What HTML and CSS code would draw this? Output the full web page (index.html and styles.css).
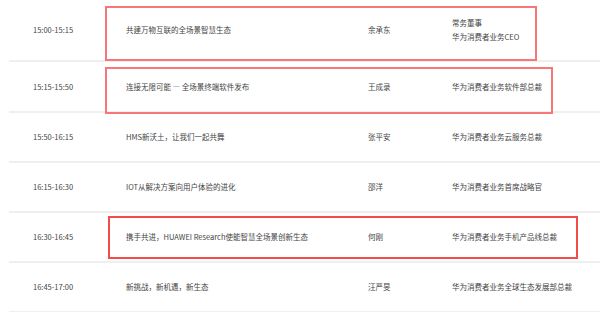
FILE: index.html
```html
<!DOCTYPE html>
<html lang="zh">
<head>
<meta charset="utf-8">
<link rel="stylesheet" href="styles.css">
</head>
<body>
<div class="agenda">
  <div class="row tall">
    <div class="time">15:00-15:15</div>
    <div class="topic">共建万物互联的全场景智慧生态</div>
    <div class="speaker">余承东</div>
    <div class="role"><span>常务董事</span><span>华为消费者业务CEO</span></div>
  </div>
  <div class="row r2">
    <div class="time">15:15-15:50</div>
    <div class="topic">连接无限可能 — 全场景终端软件发布</div>
    <div class="speaker">王成录</div>
    <div class="role">华为消费者业务软件部总裁</div>
  </div>
  <div class="row">
    <div class="time">15:50-16:15</div>
    <div class="topic">HMS新沃土，让我们一起共舞</div>
    <div class="speaker">张平安</div>
    <div class="role">华为消费者业务云服务总裁</div>
  </div>
  <div class="row">
    <div class="time">16:15-16:30</div>
    <div class="topic">IOT从解决方案向用户体验的进化</div>
    <div class="speaker">邵洋</div>
    <div class="role">华为消费者业务首席战略官</div>
  </div>
  <div class="row">
    <div class="time">16:30-16:45</div>
    <div class="topic">携手共进，HUAWEI Research使能智慧全场景创新生态</div>
    <div class="speaker">何刚</div>
    <div class="role">华为消费者业务手机产品线总裁</div>
  </div>
  <div class="row">
    <div class="time">16:45-17:00</div>
    <div class="topic">新挑战，新机遇，新生态</div>
    <div class="speaker">汪严旻</div>
    <div class="role">华为消费者业务全球生态发展部总裁</div>
  </div>
  <div class="mark mark1"></div>
  <div class="mark mark2"></div>
  <div class="mark mark3"></div>
</div>
</body>
</html>
```

FILE: styles.css
```css
html, body {
  margin: 0;
  padding: 0;
  background: #ffffff;
  overflow: hidden;
}
body {
  font-family: "Noto Sans CJK SC", "Noto Sans", sans-serif;
  font-size: 7.5px;
  color: #444444;
}
.agenda {
  position: relative;
  margin-left: 9px;
  width: 591px;
}
.row {
  display: grid;
  grid-template-columns: 117px 242px 84px 1fr;
  align-items: center;
  height: 48px;
  border-bottom: 2px solid #efefef;
  line-height: 14px;
}
.row.tall {
  height: 60px;
}
.row.r2 {
  height: 49px;
}
.time {
  padding-left: 24px;
}
.role {
  display: flex;
  flex-direction: column;
}
.mark {
  position: absolute;
  box-sizing: border-box;
  border: 2px solid #f47878;
}
.mark1 {
  left: 96px;
  top: 6px;
  width: 432px;
  height: 55px;
}
.mark2 {
  left: 96px;
  top: 67px;
  width: 448px;
  height: 47px;
}
.mark3 {
  left: 99px;
  top: 216px;
  width: 470px;
  height: 43px;
  border-color: #f24c4c;
}
```
